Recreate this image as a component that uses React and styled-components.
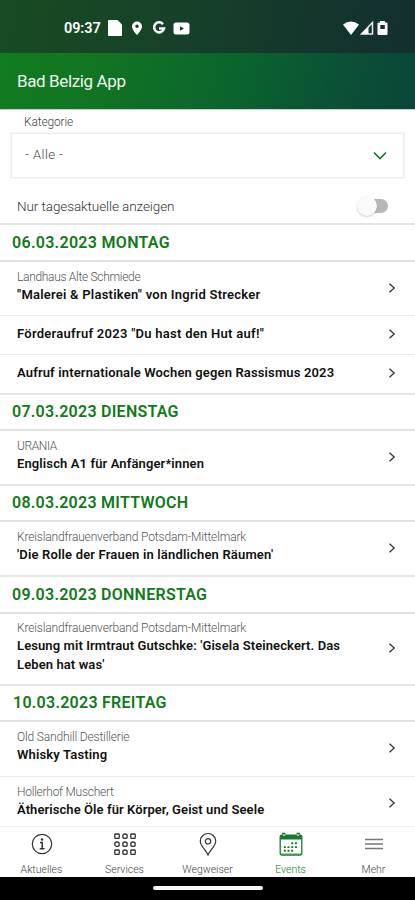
import React from "react";
import styled, { createGlobalStyle } from "styled-components";

const GlobalStyle = createGlobalStyle`
  * { box-sizing: border-box; }
  body { margin: 0; background: #fff; font-family: Roboto, "Open Sans", sans-serif; }
`;

const Screen = styled.div`
  width: 415px;
  height: 900px;
  display: flex;
  flex-direction: column;
  overflow: hidden;
  background: #fff;
`;

const StatusBar = styled.div`
  flex: none;
  height: 53px;
  padding: 3px 26px 0 64px;
  display: flex;
  align-items: center;
  justify-content: space-between;
  color: #fff;
  background: linear-gradient(100deg, #184c22 0%, #163f2a 50%, #13322e 88%, #14302f 100%);
`;

const StatusGroup = styled.div`
  display: flex;
  align-items: center;
  gap: ${(p) => p.$gap}px;
  svg { display: block; }
`;

const Clock = styled.span`
  width: 37px;
  font-size: 14.5px;
  font-weight: 600;
  letter-spacing: -0.1px;
  white-space: nowrap;
`;

const AppBar = styled.header`
  flex: none;
  height: 56px;
  padding: 0 16px 0 17px;
  display: flex;
  align-items: center;
  background: linear-gradient(105deg, #117c20 0%, #127522 22%, #0a652d 55%, #0b5136 80%, #0a4639 100%);
  box-shadow: 0 1px 1px rgba(0, 0, 0, 0.2);
`;

const AppTitle = styled.h1`
  margin: 0;
  font-size: 17px;
  font-weight: 400;
  letter-spacing: -0.38px;
  color: #eef6ee;
`;

const Filters = styled.section`
  flex: none;
  height: 116px;
  padding: 0 11px;
  border-bottom: 2px solid #e4e4e4;
`;

const FieldLabel = styled.div`
  height: 24px;
  padding: 3px 0 0 13px;
  line-height: 20px;
  font-size: 12px;
  font-weight: 300;
  letter-spacing: -0.15px;
  color: #444;
`;

const Select = styled.div`
  height: 45px;
  padding: 0 16px 2px 13px;
  display: flex;
  align-items: center;
  justify-content: space-between;
  border: 1px solid #ececec;
  box-shadow: 0 0 1px 1px #f6f6f6;
  font-size: 13px;
  font-weight: 300;
  letter-spacing: 0.5px;
  color: #444;
`;

const ToggleRow = styled.div`
  height: 45px;
  padding: 10px 16px 0 6px;
  display: flex;
  align-items: center;
  justify-content: space-between;
  font-size: 13.5px;
  font-weight: 300;
  letter-spacing: -0.09px;
  color: #333;
`;

const Switch = styled.div`
  width: 28px;
  height: 14px;
  border-radius: 7px;
  background: linear-gradient(90deg, #fff 30%, #b7b7b9 45%);
  display: flex;
  align-items: center;
`;

const Knob = styled.span`
  width: 20px;
  height: 20px;
  margin-left: -3px;
  border-radius: 50%;
  background: #fafafa;
  box-shadow: 0 1px 2px rgba(0, 0, 0, 0.2);
`;

const List = styled.main`
  flex: 1;
  min-height: 0;
  overflow: hidden;
`;

const DayHeader = styled.h2`
  margin: 0;
  height: ${(p) => p.$h}px;
  padding: 0 0 1px ${(p) => p.$indent ?? 12}px;
  display: flex;
  align-items: center;
  border-bottom: 2px solid #e1e1e1;
  font-size: 16px;
  font-weight: 600;
  letter-spacing: ${(p) => p.$track}px;
  color: #107a18;
`;

const EventRow = styled.article`
  height: ${(p) => p.$h}px;
  padding: 0 19px 0 17px;
  display: flex;
  align-items: center;
  justify-content: space-between;
  border-bottom: ${(p) => (p.$last ? "2px solid #e6e6e6" : "1px solid #ececec")};
  svg { flex: none; position: relative; top: -1px; }
`;

const EventText = styled.div`
  width: 335px;
  padding-bottom: ${(p) => (p.$place ? 4 : 2)}px;
`;

const Place = styled.div`
  font-size: 12px;
  line-height: 17px;
  font-weight: 300;
  letter-spacing: ${(p) => p.$track}px;
  color: #555;
`;

const Title = styled.div`
  font-size: 13px;
  line-height: 18.5px;
  font-weight: 600;
  letter-spacing: ${(p) => p.$track}px;
  color: #111;
  white-space: pre-line;
`;

const TabBar = styled.nav`
  flex: none;
  height: 51px;
  display: grid;
  grid-template-columns: repeat(5, 83px);
  border-top: 1px solid #efefef;
  background: #fff;
`;

const Tab = styled.div`
  height: 50px;
  padding-top: 5px;
  display: flex;
  flex-direction: column;
  align-items: center;
  gap: 7px;
  font-size: 10.5px;
  font-weight: 300;
  line-height: 14px;
  color: ${(p) => (p.$active ? "#107a28" : "#444")};
  svg { display: block; }
`;

const SystemBar = styled.div`
  flex: none;
  height: 23px;
  padding-top: 9px;
  display: flex;
  justify-content: center;
  background: #000;
`;

const HomePill = styled.span`
  width: 110px;
  height: 4px;
  border-radius: 2px;
  background: #f8f8f8;
`;

const Chevron = () => (
  <svg width="8" height="12" viewBox="0 0 8 12" fill="none" stroke="#333" strokeWidth="1.3">
    <path d="M1.5 1.8 6.2 6 1.5 10.2" />
  </svg>
);

const InfoIcon = () => (
  <svg width="22" height="24" viewBox="0 0 22 24" fill="none" stroke="#333" strokeWidth="1.2">
    <circle cx="11" cy="12" r="9.7" />
    <circle cx="11" cy="7.5" r="1.2" fill="#333" stroke="none" />
    <path d="M9 10.5h2.200v6M8.700 16.700h4.800" strokeWidth="1.5" />
  </svg>
);

const GridIcon = () => (
  <svg width="22" height="24" viewBox="0 0 22 24" fill="none" stroke="#333" strokeWidth="1.3">
    {[0, 1, 2].map((row) =>
      [0, 1, 2].map((col) => (
        <rect
          key={`${row}${col}`}
          x={0.8 + col * 8}
          y={2 + row * 8}
          width="4.4"
          height="4.4"
          rx={row === 1 || col === 1 ? 2 : 0.6}
        />
      ))
    )}
  </svg>
);

const PinIcon = () => (
  <svg width="20" height="24" viewBox="0 0 20 24" fill="none" stroke="#333" strokeWidth="1.2">
    <path d="M10 23C8 18 2.3 14 2.3 9.2a7.700 7.700 0 0 1 15.400 0C17.700 14 12 18 10 23Z" />
    <circle cx="10" cy="9.3" r="2.7" />
  </svg>
);

const CalendarIcon = () => (
  <svg width="24" height="24" viewBox="0 0 24 24" fill="none" stroke="#177a2b">
    <rect x="1.2" y="3.2" width="21.6" height="19.8" rx="1.5" strokeWidth="1.3" />
    <path d="M1.5 3h21v4.500h-21z" fill="#177a2b" stroke="none" />
    <path d="M4 3.200h2.200M17.800 3.200H20" stroke="#e7f3e9" strokeWidth="1" />
    <path d="M3 1.500h3.500M17.500 1.500H21" strokeWidth="1.3" />
    <path d="M12.200 11.300h7.500M4.800 15.100h14.900M4.800 18.800h11" strokeWidth="1.900" strokeDasharray="2 1.700" />
    <path d="M2 21.500h20" stroke="#a7c9ae" />
  </svg>
);

const MenuIcon = () => (
  <svg width="20" height="24" viewBox="0 0 20 24" stroke="#777" strokeWidth="1.5">
    <path d="M1 7.500h18M1 12h18M1 16.500h18" />
  </svg>
);

const days = [
  { label: "06.03.2023 MONTAG", h: 37, track: 0.3, events: [
    { h: 54, place: "Landhaus Alte Schmiede", placeTrack: -0.31, track: 0.23, title: "\"Malerei & Plastiken\" von Ingrid Strecker" },
    { h: 39, track: 0.27, title: "Förderaufruf 2023 \"Du hast den Hut auf!\"" },
    { h: 40, track: 0.14, title: "Aufruf internationale Wochen gegen Rassismus 2023" },
  ] },
  { label: "07.03.2023 DIENSTAG", h: 36, track: 0.26, events: [
    { h: 55, place: "URANIA", placeTrack: -0.4, track: 0.12, title: "Englisch A1 für Anfänger*innen" },
  ] },
  { label: "08.03.2023 MITTWOCH", h: 36, track: 0.26, events: [
    { h: 55, place: "Kreislandfrauenverband Potsdam-Mittelmark", placeTrack: -0.16, track: 0.17, title: "'Die Rolle der Frauen in ländlichen Räumen'" },
  ] },
  { label: "09.03.2023 DONNERSTAG", h: 37, track: 0.26, events: [
    { h: 72, place: "Kreislandfrauenverband Potsdam-Mittelmark", placeTrack: -0.16, title: "Lesung mit Irmtraut Gutschke: 'Gisela Steineckert. Das\nLeben hat was'" },
  ] },
  { label: "10.03.2023 FREITAG", h: 36, track: 0.26, indent: 13, events: [
    { h: 55, place: "Old Sandhill Destillerie", placeTrack: -0.16, track: 0.15, title: "Whisky Tasting" },
    { h: 55, place: "Hollerhof Muschert", placeTrack: -0.26, track: 0.08, title: "Ätherische Öle für Körper, Geist und Seele" },
  ] },
];

const tabs = [
  { label: "Aktuelles", Icon: InfoIcon },
  { label: "Services", Icon: GridIcon },
  { label: "Wegweiser", Icon: PinIcon },
  { label: "Events", Icon: CalendarIcon, active: true },
  { label: "Mehr", Icon: MenuIcon },
];

export default function App() {
  return (
    <Screen>
      <GlobalStyle />
      <StatusBar>
        <StatusGroup $gap={7}>
          <Clock>09:37</Clock>
          <svg width="14" height="16" viewBox="0 0 14 16" fill="#fff"><path d="M1 0h8.500L14 4.500V15a1 1 0 0 1-1 1H1a1 1 0 0 1-1-1V1a1 1 0 0 1 1-1Z" /></svg>
          <svg width="16" height="16" viewBox="0 0 16 16" fill="#fff"><path fillRule="evenodd" d="M8 1.500a5 5 0 0 0-5 5C3 10 8 15 8 15s5-5 5-8.500a5 5 0 0 0-5-5Zm0 3a1.800 1.800 0 1 1 0 3.600 1.800 1.800 0 0 1 0-3.600Z" /></svg>
          <svg width="14" height="14" viewBox="0 0 14 14" fill="none" stroke="#fff" strokeWidth="2.500"><path d="M11 3.200A5 5 0 1 0 12 7.500H7" /></svg>
          <svg width="17" height="13" viewBox="0 0 17 13" fill="#fff"><path fillRule="evenodd" d="M3 .5h11Q16.500.5 16.500 3v7q0 2.500-2.500 2.500H3Q.5 12.500.5 10V3Q.5.5 3 .5Zm4 3.700v4.600l4-2.300Z" /></svg>
        </StatusGroup>
        <StatusGroup $gap={1}>
          <svg width="16" height="14" viewBox="0 0 16 14" fill="#fff"><path d="M0 3.500Q8-2.500 16 3.500L8 14Z" /></svg>
          <svg width="14" height="14" viewBox="0 0 14 14"><path d="M1.500 13 12.500 1.500V13Z" fill="none" stroke="#e6ece8" strokeWidth="1.500" /><path d="M1.500 13 8.500 6v7Z" fill="#fff" /></svg>
          <svg width="14" height="14" viewBox="0 0 14 14"><path fill="#fff" fillRule="evenodd" d="M5 0h5v1.500h1.500q1 0 1 1V13q0 1-1 1h-8q-1 0-1-1V2.500q0-1 1-1H5Zm.3 4v4h4.500V4Z" /></svg>
        </StatusGroup>
      </StatusBar>
      <AppBar><AppTitle>Bad Belzig App</AppTitle></AppBar>
      <Filters>
        <FieldLabel>Kategorie</FieldLabel>
        <Select>
          - Alle -
          <svg width="14" height="10" viewBox="0 0 14 10" fill="none" stroke="#177a2b" strokeWidth="1.700"><path d="M1 2.500 7 8.500l6-6" /></svg>
        </Select>
        <ToggleRow>
          Nur tagesaktuelle anzeigen
          <Switch><Knob /></Switch>
        </ToggleRow>
      </Filters>
      <List>
        {days.map((day) => (
          <React.Fragment key={day.label}>
            <DayHeader $h={day.h} $track={day.track} $indent={day.indent}>{day.label}</DayHeader>
            {day.events.map((event, i) => (
              <EventRow key={event.title} $h={event.h} $last={i === day.events.length - 1}>
                <EventText $place={event.place}>
                  {event.place && <Place $track={event.placeTrack}>{event.place}</Place>}
                  <Title $track={event.track ?? 0.1}>{event.title}</Title>
                </EventText>
                <Chevron />
              </EventRow>
            ))}
          </React.Fragment>
        ))}
      </List>
      <TabBar>
        {tabs.map(({ label, Icon, active }) => (
          <Tab key={label} $active={active}><Icon />{label}</Tab>
        ))}
      </TabBar>
      <SystemBar><HomePill /></SystemBar>
    </Screen>
  );
}
